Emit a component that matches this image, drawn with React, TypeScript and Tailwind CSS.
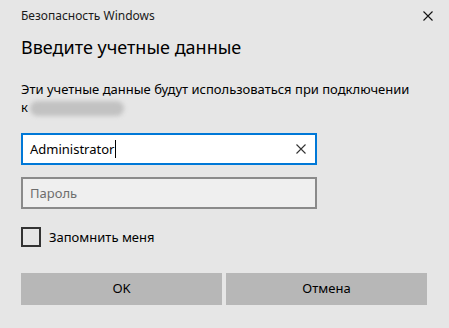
import React from "react";

export default function App() {
  const font = { fontFamily: '"Noto Sans", "Open Sans", sans-serif' };
  return (
    <div
      className="w-[449px] h-[328px] bg-[#e6e6e6] text-[#000] flex flex-col px-[21px] overflow-hidden"
      style={font}
    >
      <div className="flex items-center justify-between pt-[8px] h-[24px]">
        <span className="text-[12px] leading-[16px] text-[#1a1a1a]">Безопасность Windows</span>
        <svg width="10" height="10" viewBox="0 0 10 10" className="mr-[-5px] mt-[-1px]">
          <path d="M0.5 0.5 L9.5 9.5 M9.5 0.5 L0.5 9.5" stroke="#111" strokeWidth="1.1" />
        </svg>
      </div>
      <h1 className="mt-[10px] text-[18px] leading-[26px] text-[#000] font-normal">
        Введите учетные данные
      </h1>
      <div className="mt-[20px] text-[13px] leading-[18px] text-[#000]">
        <div className="whitespace-nowrap">Эти учетные данные будут использоваться при подключении</div>
        <div className="flex items-center">
          <span>к</span>
          <span className="inline-block w-[94px] h-[15px] ml-[2px] mt-[2px] rounded-full bg-[#c2c2c2] blur-[2px]" />
        </div>
      </div>
      <div className="mt-[17px] w-[296px] h-[32px] bg-white border-2 border-[#0078d7] flex items-center pl-[7px] pr-[9px]">
        <span className="text-[13px] leading-[20px] text-black">Administrator</span>
        <span className="w-[1px] h-[18px] bg-black ml-[1px]" />
        <span className="flex-1" />
        <svg width="10" height="10" viewBox="0 0 10 10">
          <path d="M0.5 0.5 L9.5 9.5 M9.5 0.5 L0.5 9.5" stroke="#333" strokeWidth="1.1" />
        </svg>
      </div>
      <div className="mt-[12px] w-[296px] h-[32px] bg-[#efefef] border-2 border-[#8a8a8a] flex items-center pl-[7px]">
        <span className="text-[13px] leading-[20px] text-[#6d6d6d]">Пароль</span>
      </div>
      <div className="mt-[18px] flex items-center">
        <span className="w-[20px] h-[20px] border-2 border-[#333] bg-transparent" />
        <span className="ml-[8px] text-[13px] leading-[20px] text-black">Запомнить меня</span>
      </div>
      <div className="mt-[26px] flex gap-[4px]">
        <button className="w-[201px] h-[32px] bg-[#b7b7b7] text-[13px] text-black">OK</button>
        <button className="w-[201px] h-[32px] bg-[#b7b7b7] text-[13px] text-black">Отмена</button>
      </div>
    </div>
  );
}
